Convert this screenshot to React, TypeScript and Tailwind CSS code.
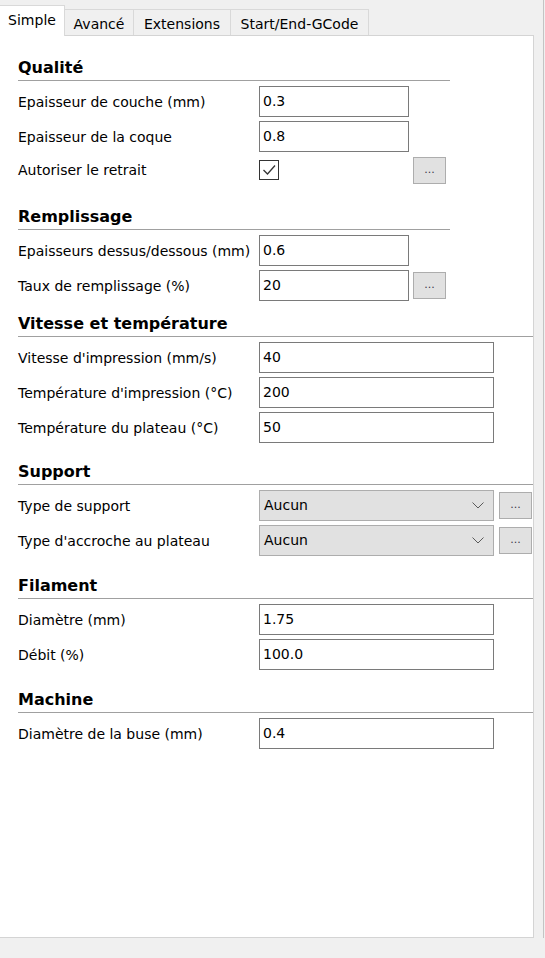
import React from "react";

function Heading({ children, className }: { children: React.ReactNode; className: string }) {
  return (
    <div className={"text-[16px] font-bold leading-[22px] pb-[1px] border-b border-[#a0a0a0] text-black " + className}>
      {children}
    </div>
  );
}

function Row({ label, children, h = "h-[31px]" }: { label: string; children?: React.ReactNode; h?: string }) {
  return (
    <div className={"flex items-center " + h}>
      <div className="w-[241px] shrink-0 text-[14px] leading-[18px] text-black whitespace-nowrap">{label}</div>
      {children}
    </div>
  );
}

function Input({ value, wide }: { value: string; wide?: boolean }) {
  return (
    <div
      className={
        (wide ? "w-[235px]" : "w-[150px]") +
        " h-[31px] shrink-0 border border-[#7a7a7a] bg-white pl-[3px] flex items-center text-[14px] text-black"
      }
    >
      {value}
    </div>
  );
}

function Dots({ className }: { className: string }) {
  return (
    <div
      className={
        "w-[33px] h-[27px] shrink-0 border border-[#adadad] bg-[#e1e1e1] flex items-center justify-center text-[11px] leading-none text-[#3a3a4a] pb-[2px] " +
        className
      }
    >
      ...
    </div>
  );
}

function Select({ value }: { value: string }) {
  return (
    <div className="w-[235px] h-[31px] shrink-0 border border-[#adadad] bg-[#e1e1e1] pl-[4px] pr-[9px] flex items-center justify-between text-[14px] text-black">
      <span>{value}</span>
      <svg width="12" height="7" viewBox="0 0 12 7">
        <polyline points="0.5,0.5 6,6 11.5,0.5" fill="none" stroke="#5a5a5a" strokeWidth="1" />
      </svg>
    </div>
  );
}

function Checkbox() {
  return (
    <div className="w-[20px] h-[20px] shrink-0 border border-[#333333] bg-white flex items-center justify-center">
      <svg width="16" height="16" viewBox="0 0 16 16">
        <polyline points="2.5,8 6.5,12 14,3.5" fill="none" stroke="#333333" strokeWidth="1.3" />
      </svg>
    </div>
  );
}

export default function App() {
  const tabBase = "h-[26px] border-t border-r border-[#d9d9d9] bg-[#f0f0f0] pt-[4px] leading-[20px] text-[14px] text-black text-center";
  return (
    <div className="w-[545px] h-[958px] bg-[#f0f0f0] overflow-hidden font-['DejaVu_Sans',sans-serif] flex">
      <div className="w-[534px] shrink-0 flex flex-col">
        <div className="h-[35px] flex items-end">
          <div className="relative z-10 -mb-px w-[65px] h-[31px] bg-white border-t border-r border-[#d9d9d9] pt-[4px] leading-[20px] text-[14px] text-black text-center">
            Simple
          </div>
          <div className={"w-[69px] " + tabBase}>Avancé</div>
          <div className={"w-[97px] " + tabBase}>Extensions</div>
          <div className={"w-[138px] " + tabBase}>Start/End-GCode</div>
        </div>
        <div className="h-[903px] bg-white border-t border-r border-b border-[#d4d4d4] pl-[18px] flex flex-col">
          <div className="w-[432px]">
            <Heading className="mt-[21px]">Qualité</Heading>
          </div>
          <div className="mt-[5px] flex flex-col gap-[4px]">
            <Row label="Epaisseur de couche (mm)">
              <Input value="0.3" />
            </Row>
            <Row label="Epaisseur de la coque">
              <Input value="0.8" />
            </Row>
            <Row label="Autoriser le retrait" h="h-[28px]">
              <div className="w-[150px] shrink-0 flex items-center">
                <Checkbox />
              </div>
              <Dots className="ml-[4px]" />
            </Row>
          </div>

          <div className="w-[432px]">
            <Heading className="mt-[22px]">Remplissage</Heading>
          </div>
          <div className="mt-[5px] flex flex-col gap-[4px]">
            <Row label="Epaisseurs dessus/dessous (mm)">
              <Input value="0.6" />
            </Row>
            <Row label="Taux de remplissage (%)">
              <Input value="20" />
              <Dots className="ml-[4px]" />
            </Row>
          </div>

          <Heading className="mt-[12px]">Vitesse et température</Heading>
          <div className="mt-[5px] flex flex-col gap-[4px]">
            <Row label="Vitesse d'impression (mm/s)">
              <Input value="40" wide />
            </Row>
            <Row label="Température d'impression (°C)">
              <Input value="200" wide />
            </Row>
            <Row label="Température du plateau (°C)">
              <Input value="50" wide />
            </Row>
          </div>

          <Heading className="mt-[18px]">Support</Heading>
          <div className="mt-[5px] flex flex-col gap-[4px]">
            <Row label="Type de support">
              <Select value="Aucun" />
              <Dots className="ml-[5px]" />
            </Row>
            <Row label="Type d'accroche au plateau">
              <Select value="Aucun" />
              <Dots className="ml-[5px]" />
            </Row>
          </div>

          <Heading className="mt-[19px]">Filament</Heading>
          <div className="mt-[5px] flex flex-col gap-[4px]">
            <Row label="Diamètre (mm)">
              <Input value="1.75" wide />
            </Row>
            <Row label="Débit (%)">
              <Input value="100.0" wide />
            </Row>
          </div>

          <Heading className="mt-[19px]">Machine</Heading>
          <div className="mt-[5px] flex flex-col gap-[4px]">
            <Row label="Diamètre de la buse (mm)">
              <Input value="0.4" wide />
            </Row>
          </div>
        </div>
      </div>
      <div className="flex-1">
        <div className="ml-[9px] w-px h-[938px] bg-[#c4c4c4]" />
      </div>
    </div>
  );
}
